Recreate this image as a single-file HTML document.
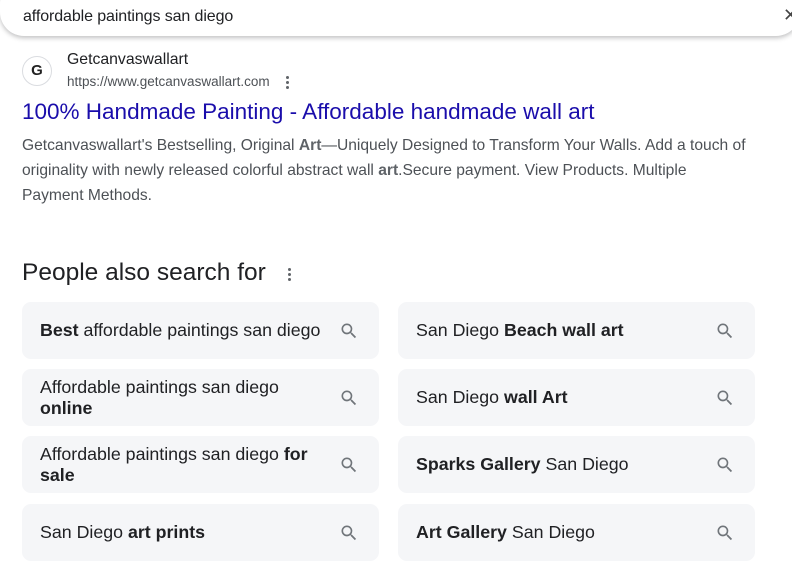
<!DOCTYPE html>
<html><head><meta charset="utf-8"><style>
body{margin:0;width:792px;height:582px;background:#fff;font-family:"Liberation Sans",Arial,sans-serif;position:relative;overflow:hidden;color:#202124}
.bar{position:absolute;left:0;top:-20px;width:800px;height:56px;background:#fff;box-shadow:0 2px 5px rgba(32,33,36,.28);border-radius:24px}
.q{position:absolute;left:23px;top:8px;font-size:16px;letter-spacing:-0.1px;color:#202124}
.x{position:absolute;left:783px;top:5px;font-size:18px;color:#444}
.fav{position:absolute;left:22px;top:56px;width:30px;height:30px;border-radius:50%;border:1px solid #dadce0;box-sizing:border-box;font-weight:bold;font-size:15px;text-align:center;line-height:28px;color:#222}
.site{position:absolute;left:67px;top:51px;font-size:15.8px}
.url{position:absolute;left:67px;top:74px;font-size:13.5px;color:#4d5156}
.dots{position:absolute;left:286px;top:76px;width:4px}
.dots i,.d2 i{display:block;width:3px;height:3px;border-radius:50%;background:#5f6368;margin-bottom:2px}
.title{position:absolute;left:22px;top:99px;font-size:22.5px;color:#1a0dab;white-space:nowrap}
.desc{position:absolute;left:22px;top:133px;width:730px;font-size:15.6px;line-height:25px;color:#4d5156}
.desc b{color:#5f6368}
.h{position:absolute;left:22px;top:259px;font-size:24.5px;color:#202124}
.d2{position:absolute;left:288px;top:268px}
.c{position:absolute;width:357px;height:57px;background:#f5f6f8;border-radius:9px;font-size:17.8px;box-sizing:border-box;padding-left:18px;display:flex;align-items:center;line-height:21px}
.c span{width:290px}
.c svg{position:absolute;right:20px;top:19px}
</style></head><body>
<div class="bar"></div>
<div class="q">affordable paintings san diego</div>
<div class="x">✕</div>
<div class="fav">G</div>
<div class="site">Getcanvaswallart</div>
<div class="url">https://www.getcanvaswallart.com</div>
<div class="dots"><i></i><i></i><i></i></div>
<div class="title">100% Handmade Painting - Affordable handmade wall art</div>
<div class="desc">Getcanvaswallart's Bestselling, Original <b>Art</b>—Uniquely Designed to Transform Your Walls. Add a touch of originality with newly released colorful abstract wall <b>art</b>.Secure payment. View Products. Multiple Payment Methods.</div>
<div class="h">People also search for</div>
<div class="d2"><i></i><i></i><i></i></div>
<div class="c" style="left:22px;top:302px"><span><b>Best</b> affordable paintings san diego</span><svg width="20" height="20" viewBox="0 0 24 24"><path fill="#70757a" d="M15.5 14h-.79l-.28-.27A6.47 6.47 0 0016 9.5 6.5 6.5 0 109.5 16c1.61 0 3.09-.59 4.23-1.57l.27.28v.79l5 4.99L20.49 19l-4.99-5zm-6 0C7.01 14 5 11.990 5 9.5S7.01 5 9.5 5 14 7.01 14 9.5 11.99 14 9.5 14z"/></svg></div>
<div class="c" style="left:398px;top:302px"><span>San Diego <b>Beach wall art</b></span><svg width="20" height="20" viewBox="0 0 24 24"><path fill="#70757a" d="M15.5 14h-.79l-.28-.27A6.47 6.47 0 0016 9.5 6.5 6.5 0 109.5 16c1.61 0 3.09-.59 4.23-1.57l.27.28v.79l5 4.99L20.49 19l-4.99-5zm-6 0C7.01 14 5 11.99 5 9.5S7.01 5 9.5 5 14 7.01 14 9.5 11.99 14 9.5 14z"/></svg></div>
<div class="c" style="left:22px;top:369px"><span>Affordable paintings san diego <b>online</b></span><svg width="20" height="20" viewBox="0 0 24 24"><path fill="#70757a" d="M15.5 14h-.79l-.28-.27A6.47 6.47 0 0016 9.5 6.5 6.5 0 109.5 16c1.61 0 3.09-.59 4.23-1.57l.27.28v.79l5 4.99L20.49 19l-4.99-5zm-6 0C7.01 14 5 11.99 5 9.5S7.01 5 9.5 5 14 7.01 14 9.5 11.99 14 9.5 14z"/></svg></div>
<div class="c" style="left:398px;top:369px"><span>San Diego <b>wall Art</b></span><svg width="20" height="20" viewBox="0 0 24 24"><path fill="#70757a" d="M15.5 14h-.79l-.28-.27A6.47 6.47 0 0016 9.5 6.5 6.5 0 109.5 16c1.61 0 3.09-.59 4.23-1.57l.27.28v.79l5 4.99L20.49 19l-4.99-5zm-6 0C7.01 14 5 11.99 5 9.5S7.01 5 9.5 5 14 7.01 14 9.5 11.99 14 9.5 14z"/></svg></div>
<div class="c" style="left:22px;top:436px"><span>Affordable paintings san diego <b>for sale</b></span><svg width="20" height="20" viewBox="0 0 24 24"><path fill="#70757a" d="M15.5 14h-.79l-.28-.27A6.47 6.47 0 0016 9.5 6.5 6.5 0 109.5 16c1.61 0 3.09-.59 4.23-1.57l.27.28v.79l5 4.99L20.49 19l-4.99-5zm-6 0C7.01 14 5 11.99 5 9.5S7.01 5 9.5 5 14 7.01 14 9.5 11.99 14 9.5 14z"/></svg></div>
<div class="c" style="left:398px;top:436px"><span><b>Sparks Gallery</b> San Diego</span><svg width="20" height="20" viewBox="0 0 24 24"><path fill="#70757a" d="M15.5 14h-.79l-.28-.27A6.47 6.47 0 0016 9.5 6.5 6.5 0 109.5 16c1.61 0 3.09-.59 4.23-1.57l.27.28v.79l5 4.99L20.49 19l-4.99-5zm-6 0C7.01 14 5 11.99 5 9.5S7.01 5 9.5 5 14 7.01 14 9.5 11.99 14 9.5 14z"/></svg></div>
<div class="c" style="left:22px;top:504px"><span>San Diego <b>art prints</b></span><svg width="20" height="20" viewBox="0 0 24 24"><path fill="#70757a" d="M15.5 14h-.79l-.28-.27A6.47 6.47 0 0016 9.5 6.5 6.5 0 109.5 16c1.61 0 3.09-.59 4.23-1.57l.27.28v.79l5 4.99L20.49 19l-4.99-5zm-6 0C7.01 14 5 11.99 5 9.5S7.01 5 9.5 5 14 7.01 14 9.5 11.99 14 9.5 14z"/></svg></div>
<div class="c" style="left:398px;top:504px"><span><b>Art Gallery</b> San Diego</span><svg width="20" height="20" viewBox="0 0 24 24"><path fill="#70757a" d="M15.5 14h-.79l-.28-.27A6.47 6.47 0 0016 9.5 6.5 6.5 0 109.5 16c1.61 0 3.09-.59 4.23-1.57l.27.28v.79l5 4.99L20.49 19l-4.99-5zm-6 0C7.01 14 5 11.99 5 9.5S7.01 5 9.5 5 14 7.01 14 9.5 11.99 14 9.5 14z"/></svg></div>
</body></html>
